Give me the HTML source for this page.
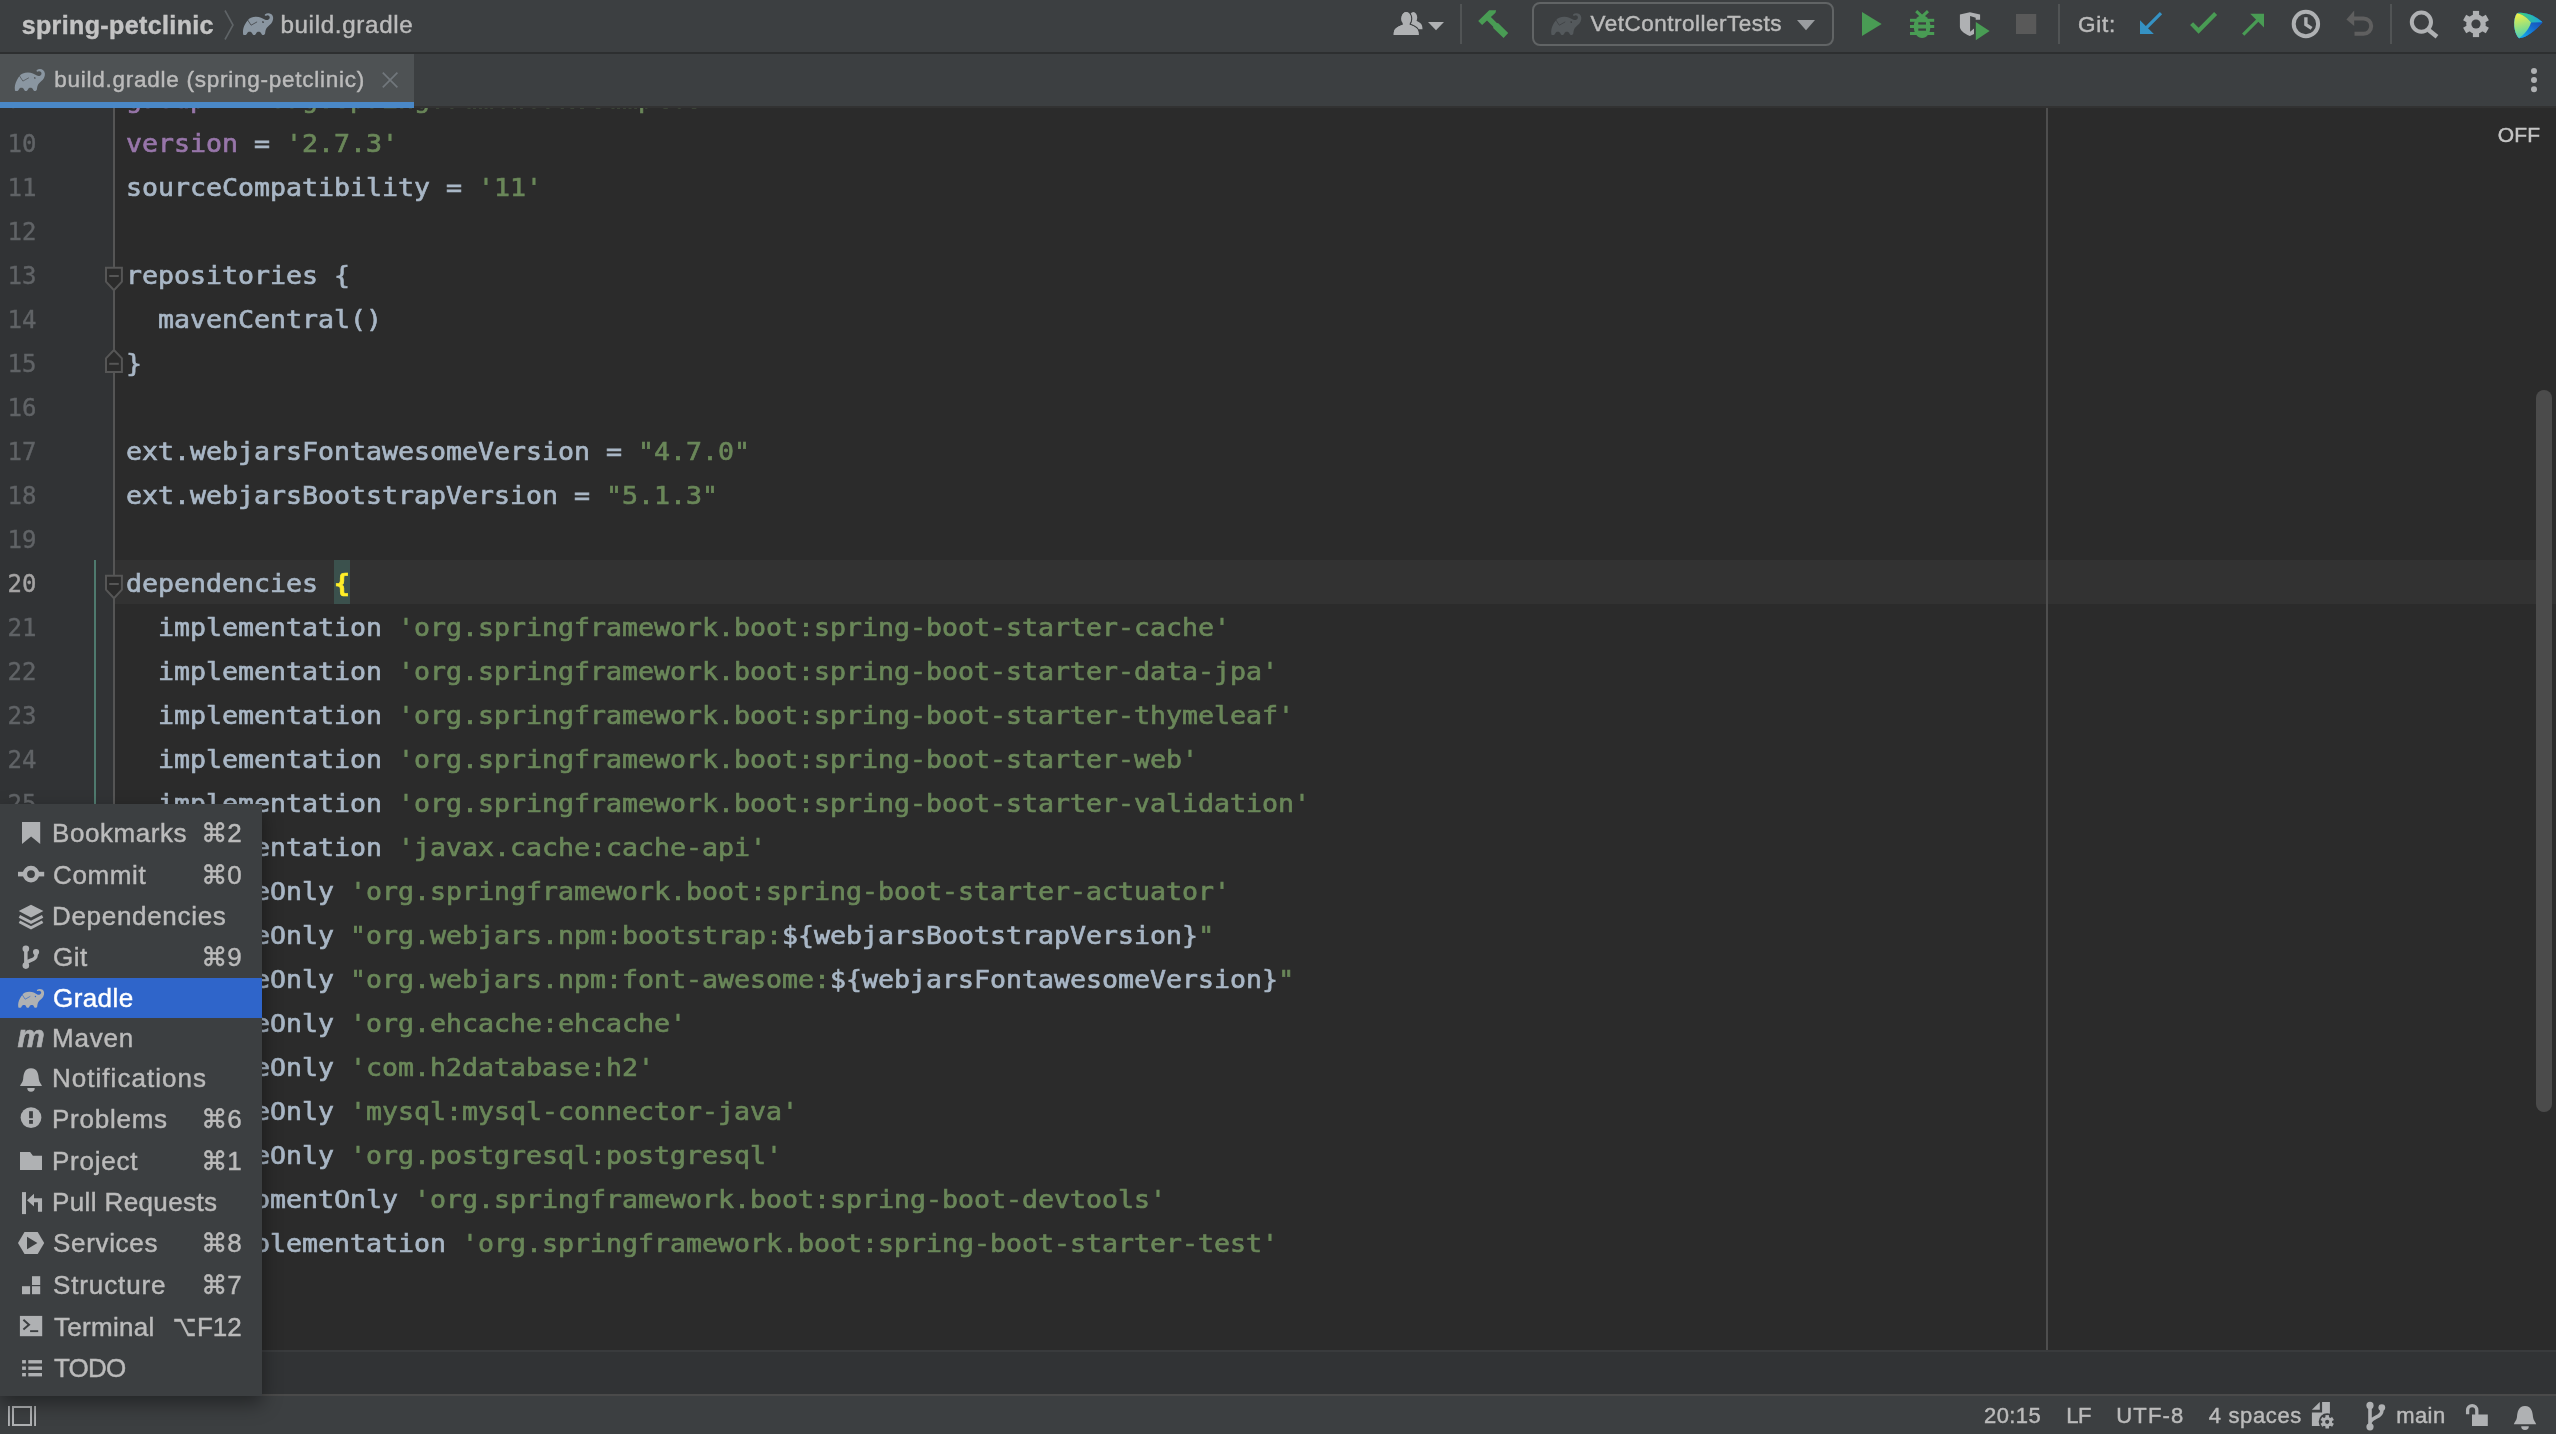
<!DOCTYPE html>
<html lang="en">
<head>
<meta charset="utf-8">
<title>spring-petclinic – build.gradle</title>
<style>
*{box-sizing:border-box;margin:0;padding:0}
html,body{width:2556px;height:1434px;overflow:hidden;background:#2b2b2b}
body{position:relative;font-family:"Liberation Sans",sans-serif;color:#bbbbbb;-webkit-font-smoothing:antialiased}
.abs{position:absolute}
svg{position:absolute;overflow:visible}
.gl{position:absolute;will-change:transform}
/* toolbar */
#toolbar{left:0;top:0;width:2556px;height:52px;background:#3c3f41}
#tbborder{left:0;top:52px;width:2556px;height:2px;background:#2d2f30}
.ui{position:absolute;white-space:nowrap;font-size:25px;line-height:30px;color:#bbbbbb}
.vsep{position:absolute;width:2px;background:#515455}
/* tabs */
#tabbar{left:0;top:54px;width:2556px;height:52px;background:#3c3f41}
#tabborder{left:0;top:106px;width:2556px;height:2px;background:#323232}
#tab{left:0;top:54px;width:414px;height:48px;background:#4e5254}
#tabline{left:0;top:102px;width:414px;height:6px;background:#4a88c7}
/* editor */
#editor{left:0;top:108px;width:2556px;height:1242px;background:#2b2b2b;overflow:hidden}
#gutter{left:0;top:0;width:113px;height:1242px;background:#313335}
#foldline{left:112.9px;top:0;width:2.2px;height:1242px;background:#555555}
#vcs{left:94px;top:452px;width:2px;height:790px;background:#4f7a6e}
#curline{left:115px;top:452px;width:2441px;height:44px;background:#323232}
#bracebg{left:334px;top:452px;width:16px;height:44px;background:#3b514d}
#margin{left:2046px;top:0;width:2px;height:1242px;background:#4e4e4e}
#scroll{left:2536px;top:282px;width:16px;height:722px;border-radius:8px;background:#4b4b4b}
.ln{position:absolute;left:7.5px;height:44px;line-height:48.4px;font-family:"DejaVu Sans Mono","Liberation Mono",monospace;font-size:24px;color:#606366;white-space:pre;letter-spacing:0}
.ln.cur{color:#a4a3a3}
.cl{position:absolute;left:126px;height:44px;line-height:46px;font-family:"DejaVu Sans Mono","Liberation Mono",monospace;font-size:26.58px;color:#a9b7c6;white-space:pre}
.cl{-webkit-text-stroke:0.7px;transform:scaleY(0.955);transform-origin:0 32.2px}
.ln{-webkit-text-stroke:0.4px}
.ui,.gl .t,.gl .k{-webkit-text-stroke:0.45px}
.s{color:#6a8759}.p{color:#9876aa}.y{color:#ffef28}
/* breadcrumb band + status */
#crumbtop{left:0;top:1350px;width:2556px;height:2px;background:#393b3d}
#crumb{left:0;top:1352px;width:2556px;height:42px;background:#313335}
#statustop{left:0;top:1394px;width:2556px;height:2px;background:#4a4a4a}
#status{left:0;top:1396px;width:2556px;height:38px;background:#3c3f41}
/* popup */
#popup{left:0;top:804px;width:262px;height:592px;background:#3c3f41;box-shadow:0 8px 18px rgba(0,0,0,.4)}
.mi{position:absolute;left:0;width:262px}
.mi.sel{background:#2f65ca}
.gl .t{position:absolute;font-size:26px;line-height:30px;color:#bbbbbb;white-space:nowrap}
.gl .t.sel{color:#ffffff}
.sym{font-family:"DejaVu Sans",sans-serif}
.sym.opt{display:inline-block;transform:scale(0.78,1.12);transform-origin:92% 80%}
.gl .k{position:absolute;right:20.3px;font-size:26px;line-height:30px;font-family:"Liberation Sans",sans-serif;color:#bbbbbb;white-space:nowrap}
</style>
</head>
<body>
<!-- ======= TOOLBAR ======= -->
<div id="toolbar" class="abs"></div>
<div id="tbborder" class="abs"></div>
<div class="vsep" style="left:1460px;top:4px;height:40px"></div>
<div class="vsep" style="left:2058px;top:4px;height:40px"></div>
<div class="vsep" style="left:2390px;top:4px;height:40px"></div>
<div class="abs" id="runbox" style="left:1532px;top:2px;width:302px;height:44px;border:2px solid #616465;border-radius:8px"></div>
<svg width="2556" height="1434" viewBox="0 0 2556 1434" style="left:0;top:0"><path d="M225,10.5L233,25L225,39.5" fill="none" stroke="#5f6467" stroke-width="1.6"/>
<g transform="translate(236.02,5.99) scale(0.02511)"><path d="M285,1135C260,1000 290,850 360,730C400,660 430,610 470,565C520,480 650,430 800,425C950,425 1060,490 1160,545C1230,580 1310,560 1340,480C1355,410 1290,365 1230,375C1200,380 1180,395 1165,390C1140,380 1135,345 1160,325C1220,280 1330,270 1410,330C1490,400 1500,520 1440,640C1390,740 1290,790 1220,880C1180,940 1165,1020 1160,1090C1150,1140 1120,1160 1080,1160C1040,1160 1015,1130 1005,1100C990,1050 950,1030 900,1030C850,1030 815,1055 800,1100C790,1135 760,1160 720,1160C680,1160 655,1135 645,1100C630,1050 590,1030 540,1030C490,1030 455,1055 440,1100C430,1135 400,1160 355,1160C320,1160 290,1150 285,1135Z" fill="#8a96a1"/><path d="M470,565L600,765L825,640" fill="none" stroke="#3c3f41" stroke-width="30" stroke-linecap="round" stroke-linejoin="round"/><ellipse cx="1075" cy="640" rx="30" ry="38" transform="rotate(-30 1075 640)" fill="#3c3f41"/></g>
<g fill="#afb1b3"><ellipse cx="1413.3" cy="17.7" rx="3.9" ry="5.7"/><path d="M1404.1,29.2C1404.1,23.5 1406.3999999999999,22.55 1410.882,20.46V17.7H1415.7179999999998V20.46C1420.2,22.55 1422.5,23.5 1422.5,29.2Z"/></g><g fill="#afb1b3" stroke="#3c3f41" stroke-width="2.4" paint-order="stroke"><ellipse cx="1406.2" cy="18.8" rx="4.9" ry="6.8"/><path d="M1393.7,35C1393.7,28.1 1396.825,26.950000000000003 1403.162,24.42V18.8H1409.238V24.42C1415.575,26.950000000000003 1418.7,28.1 1418.7,35Z"/></g><g fill="#afb1b3"><ellipse cx="1406.2" cy="18.8" rx="4.9" ry="6.8"/><path d="M1393.7,35C1393.7,28.1 1396.825,26.950000000000003 1403.162,24.42V18.8H1409.238V24.42C1415.575,26.950000000000003 1418.7,28.1 1418.7,35Z"/></g><rect x="1392" y="35" width="30" height="3" fill="#3c3f41"/><path d="M1428,22h16l-8,8.2z" fill="#afb1b3"/>
<path fill="#499c54" d="M1478.2,21.1L1489.2,10.2L1496.1,10.2L1495.5,12.7L1490.9,16.9L1496.9,22.9L1498.3,23.2L1508.2,33.1L1503.6,38L1493.4,28.2L1493,26.4L1487,20.4L1482.1,25Z"/>
<g transform="translate(1544.22,5.99) scale(0.02511)"><path d="M285,1135C260,1000 290,850 360,730C400,660 430,610 470,565C520,480 650,430 800,425C950,425 1060,490 1160,545C1230,580 1310,560 1340,480C1355,410 1290,365 1230,375C1200,380 1180,395 1165,390C1140,380 1135,345 1160,325C1220,280 1330,270 1410,330C1490,400 1500,520 1440,640C1390,740 1290,790 1220,880C1180,940 1165,1020 1160,1090C1150,1140 1120,1160 1080,1160C1040,1160 1015,1130 1005,1100C990,1050 950,1030 900,1030C850,1030 815,1055 800,1100C790,1135 760,1160 720,1160C680,1160 655,1135 645,1100C630,1050 590,1030 540,1030C490,1030 455,1055 440,1100C430,1135 400,1160 355,1160C320,1160 290,1150 285,1135Z" fill="#54595c"/><path d="M470,565L600,765L825,640" fill="none" stroke="#3c3f41" stroke-width="30" stroke-linecap="round" stroke-linejoin="round"/><ellipse cx="1075" cy="640" rx="30" ry="38" transform="rotate(-30 1075 640)" fill="#3c3f41"/></g>
<path d="M1797,20h18l-9,10.2z" fill="#9a9da0"/>
<path d="M1862,12L1881.7,24L1862,36Z" fill="#499c54"/>
<g fill="#499c54"><ellipse cx="1922.1" cy="26.8" rx="8.4" ry="11.2"/><rect x="1910" y="18.8" width="24.2" height="3"/><rect x="1910" y="25" width="24.2" height="3"/><rect x="1910" y="32" width="24.2" height="3"/><path d="M1916.2,11.2L1922.1,16.6L1928,11.2" fill="none" stroke="#499c54" stroke-width="3"/></g><g fill="#3c3f41"><rect x="1918.3" y="22.3" width="7.7" height="2.3"/><rect x="1918.3" y="28.5" width="7.7" height="2.2"/><rect x="1909" y="22" width="4.3" height="2.9"/><rect x="1930.9" y="22" width="4.3" height="2.9"/><rect x="1909" y="28.2" width="4.3" height="3.6"/><rect x="1930.9" y="28.2" width="4.3" height="3.6"/></g>
<path fill="#afb1b3" fill-rule="evenodd" d="M1959.9,14.6L1969.9,12.2L1980.1,14.5V19.8H1975.7V17.7L1970.1,16.1V31.8L1974,28.6V34L1969.9,36C1963,33 1960.3,30 1959.9,26.9Z"/><path d="M1975.8,22L1989.6,31.1L1975.8,40.3Z" fill="#499c54"/>
<rect x="2016" y="14" width="20.2" height="20" fill="#595959"/>
<path d="M2140,20.2V34H2153.8Z" fill="#3592c4"/><path d="M2161,13.2L2146,28.2" stroke="#3592c4" stroke-width="3.2" fill="none"/>
<path d="M2191.6,23.6L2198.6,30.8L2215.6,13.6" stroke="#499c54" stroke-width="4.2" fill="none"/>
<path d="M2250.2,13.8H2264V27.6Z" fill="#499c54"/><path d="M2243.2,34.6L2258,19.8" stroke="#499c54" stroke-width="3.2" fill="none"/>
<circle cx="2305.9" cy="24" r="12.2" fill="none" stroke="#afb1b3" stroke-width="4"/><path d="M2305.9,17.2V24.6L2311.6,28.4" fill="none" stroke="#afb1b3" stroke-width="3.4"/>
<path d="M2346.4,19.6L2354.2,10.6V26Z" fill="#5f5f5f"/><path d="M2353.5,18.4H2363.5A7.7,7.7 0 0 1 2363.5,33.8H2354.5" fill="none" stroke="#5f5f5f" stroke-width="4"/>
<circle cx="2421.4" cy="22.1" r="9.6" fill="none" stroke="#afb1b3" stroke-width="4"/><path d="M2428.6,30L2437,36.8" stroke="#afb1b3" stroke-width="4.4" fill="none"/>
<g fill="#afb1b3"><rect x="2472.9" y="10.9" width="6.2" height="26.2" transform="rotate(0 2476 24)"/><rect x="2472.9" y="10.9" width="6.2" height="26.2" transform="rotate(60 2476 24)"/><rect x="2472.9" y="10.9" width="6.2" height="26.2" transform="rotate(120 2476 24)"/><circle cx="2476" cy="24" r="9.8"/></g><circle cx="2476" cy="24" r="4.6" fill="#3c3f41"/>
<path d="M2517,13.2C2525,11.5 2536,16 2542.4,22.2C2536,30 2527,37.5 2519,38.2C2513.5,33 2512.5,19 2517,13.2Z" fill="#1565c8"/><path d="M2542.4,22.2L2531,22.5C2529,29 2524,35 2519,38.2C2527,37.5 2536,30 2542.4,22.2Z" fill="#1a55bb"/></svg><div class="abs" style="left:2512px;top:12px;width:32px;height:28px;background:linear-gradient(35deg,#13a6e8 22%,#1668cc 55%,#1a42aa 90%);clip-path:path('M5,1.2C13,-0.5 24,4 30.4,10.2C24,18 15,25.5 7,26.2C1.5,21 0.5,7 5,1.2Z')"></div><div class="abs" style="left:2512px;top:12px;width:32px;height:28px;background:linear-gradient(100deg,#3bd07a 25%,#1aa3e0 85%);clip-path:path('M5,1.2C13,-0.5 24,4 30.4,10.2L19,10.5C16,6 11,2.5 5,1.2Z')"></div><div class="abs" style="left:2512px;top:12px;width:32px;height:28px;background:linear-gradient(165deg,#f4f045 8%,#7fdc8c 55%,#1fb8e8 98%);clip-path:path('M5,1.2C11,2.5 16,6 19,10.5C17,17 12,23 7,26.2C1.5,21 0.5,7 5,1.2Z')"></div>

<!-- ======= TABS ======= -->
<div id="tabbar" class="abs"></div>
<div id="tabborder" class="abs"></div>
<div id="tab" class="abs"></div>
<div id="tabline" class="abs"></div>
<div class="gl" style="left:0;top:0;width:2556px;height:108px"><div class="ui" id="tx_proj" style="left:21.7px;top:10.3px;font-size:25px;letter-spacing:0.38px;color:#c3c3c3;font-weight:bold">spring-petclinic</div><div class="ui" id="tx_file" style="left:280.4px;top:10.3px;font-size:24.2px;letter-spacing:0.664px;color:#bbbbbb">build.gradle</div><div class="ui" id="tx_run" style="left:1590.6px;top:9.4px;font-size:22.5px;letter-spacing:0.494px;color:#bbbbbb">VetControllerTests</div><div class="ui" id="tx_git" style="left:2077.9px;top:9.5px;font-size:22.5px;letter-spacing:0.767px;color:#bbbbbb">Git:</div><div class="ui" id="tx_tab" style="left:54.3px;top:64.9px;font-size:22.5px;letter-spacing:0.74px;color:#bbbbbb">build.gradle (spring-petclinic)</div></div>
<svg width="2556" height="1434" viewBox="0 0 2556 1434" style="left:0;top:0"><g transform="translate(7.82,61.89) scale(0.02511)"><path d="M285,1135C260,1000 290,850 360,730C400,660 430,610 470,565C520,480 650,430 800,425C950,425 1060,490 1160,545C1230,580 1310,560 1340,480C1355,410 1290,365 1230,375C1200,380 1180,395 1165,390C1140,380 1135,345 1160,325C1220,280 1330,270 1410,330C1490,400 1500,520 1440,640C1390,740 1290,790 1220,880C1180,940 1165,1020 1160,1090C1150,1140 1120,1160 1080,1160C1040,1160 1015,1130 1005,1100C990,1050 950,1030 900,1030C850,1030 815,1055 800,1100C790,1135 760,1160 720,1160C680,1160 655,1135 645,1100C630,1050 590,1030 540,1030C490,1030 455,1055 440,1100C430,1135 400,1160 355,1160C320,1160 290,1150 285,1135Z" fill="#8a96a1"/><path d="M470,565L600,765L825,640" fill="none" stroke="#4e5254" stroke-width="30" stroke-linecap="round" stroke-linejoin="round"/><ellipse cx="1075" cy="640" rx="30" ry="38" transform="rotate(-30 1075 640)" fill="#4e5254"/></g>
<path d="M382.8,72.6L397.4,87.4M397.4,72.6L382.8,87.4" stroke="#71777c" stroke-width="1.7" fill="none"/>
<circle cx="2534" cy="70.9" r="3" fill="#afb1b3"/>
<circle cx="2534" cy="80" r="3" fill="#afb1b3"/>
<circle cx="2534" cy="89.2" r="3" fill="#afb1b3"/></svg>

<!-- ======= EDITOR ======= -->
<div id="editor" class="abs">
<div id="gutter" class="abs"></div>
<div id="curline" class="abs"></div>
<div id="bracebg" class="abs"></div>
<div id="vcs" class="abs"></div>
<div id="foldline" class="abs"></div>
<div id="margin" class="abs"></div>
<div id="scroll" class="abs"></div>
<div class="gl" style="left:0;top:0;width:2556px;height:1242px"><div class="ui" id="tx_off" style="left:2497.7px;top:11.7px;font-size:21px;letter-spacing:0.15px;color:#c4c4c4">OFF</div>
<div class="ln" style="top:-32px">9</div>
<div class="cl" style="top:-32px"><span class="p">group</span> = <span class="s">'org.springframework.samples'</span></div>
<div class="ln" style="top:12px">10</div>
<div class="cl" style="top:12px"><span class="p">version</span> = <span class="s">'2.7.3'</span></div>
<div class="ln" style="top:56px">11</div>
<div class="cl" style="top:56px">sourceCompatibility = <span class="s">'11'</span></div>
<div class="ln" style="top:100px">12</div>
<div class="ln" style="top:144px">13</div>
<div class="cl" style="top:144px">repositories {</div>
<div class="ln" style="top:188px">14</div>
<div class="cl" style="top:188px">  mavenCentral()</div>
<div class="ln" style="top:232px">15</div>
<div class="cl" style="top:232px">}</div>
<div class="ln" style="top:276px">16</div>
<div class="ln" style="top:320px">17</div>
<div class="cl" style="top:320px">ext.webjarsFontawesomeVersion = <span class="s">"4.7.0"</span></div>
<div class="ln" style="top:364px">18</div>
<div class="cl" style="top:364px">ext.webjarsBootstrapVersion = <span class="s">"5.1.3"</span></div>
<div class="ln" style="top:408px">19</div>
<div class="ln cur" style="top:452px">20</div>
<div class="cl" style="top:452px">dependencies <span class="y" style="font-weight:bold">{</span></div>
<div class="ln" style="top:496px">21</div>
<div class="cl" style="top:496px">  implementation <span class="s">'org.springframework.boot:spring-boot-starter-cache'</span></div>
<div class="ln" style="top:540px">22</div>
<div class="cl" style="top:540px">  implementation <span class="s">'org.springframework.boot:spring-boot-starter-data-jpa'</span></div>
<div class="ln" style="top:584px">23</div>
<div class="cl" style="top:584px">  implementation <span class="s">'org.springframework.boot:spring-boot-starter-thymeleaf'</span></div>
<div class="ln" style="top:628px">24</div>
<div class="cl" style="top:628px">  implementation <span class="s">'org.springframework.boot:spring-boot-starter-web'</span></div>
<div class="ln" style="top:672px">25</div>
<div class="cl" style="top:672px">  implementation <span class="s">'org.springframework.boot:spring-boot-starter-validation'</span></div>
<div class="ln" style="top:716px">26</div>
<div class="cl" style="top:716px">  implementation <span class="s">'javax.cache:cache-api'</span></div>
<div class="ln" style="top:760px">27</div>
<div class="cl" style="top:760px">  runtimeOnly <span class="s">'org.springframework.boot:spring-boot-starter-actuator'</span></div>
<div class="ln" style="top:804px">28</div>
<div class="cl" style="top:804px">  runtimeOnly <span class="s">"org.webjars.npm:bootstrap:</span>${webjarsBootstrapVersion}<span class="s">"</span></div>
<div class="ln" style="top:848px">29</div>
<div class="cl" style="top:848px">  runtimeOnly <span class="s">"org.webjars.npm:font-awesome:</span>${webjarsFontawesomeVersion}<span class="s">"</span></div>
<div class="ln" style="top:892px">30</div>
<div class="cl" style="top:892px">  runtimeOnly <span class="s">'org.ehcache:ehcache'</span></div>
<div class="ln" style="top:936px">31</div>
<div class="cl" style="top:936px">  runtimeOnly <span class="s">'com.h2database:h2'</span></div>
<div class="ln" style="top:980px">32</div>
<div class="cl" style="top:980px">  runtimeOnly <span class="s">'mysql:mysql-connector-java'</span></div>
<div class="ln" style="top:1024px">33</div>
<div class="cl" style="top:1024px">  runtimeOnly <span class="s">'org.postgresql:postgresql'</span></div>
<div class="ln" style="top:1068px">34</div>
<div class="cl" style="top:1068px">  developmentOnly <span class="s">'org.springframework.boot:spring-boot-devtools'</span></div>
<div class="ln" style="top:1112px">35</div>
<div class="cl" style="top:1112px">  testImplementation <span class="s">'org.springframework.boot:spring-boot-starter-test'</span></div>
<div class="ln" style="top:1156px">36</div>
<div class="cl" style="top:1156px"><span class="y" style="font-weight:bold">}</span></div>
</div>
<svg width="2556" height="1242" style="left:0;top:0"><path d="M106,159.8H121.9V173.6L113.95,182.2L106,173.6Z" fill="#2b2b2b" stroke="#565656" stroke-width="2"/><path d="M109.2,168H118.8" stroke="#565656" stroke-width="2"/>
<path d="M106,263.9H121.9V250.3L113.95,242L106,250.3Z" fill="#2b2b2b" stroke="#565656" stroke-width="2"/><path d="M109.2,255.8H118.8" stroke="#565656" stroke-width="2"/>
<path d="M106,467.8H121.9V481.6L113.95,490.2L106,481.6Z" fill="#2b2b2b" stroke="#565656" stroke-width="2"/><path d="M109.2,476H118.8" stroke="#565656" stroke-width="2"/>
<path d="M106,1187.9H121.9V1174.3L113.95,1166L106,1174.3Z" fill="#2b2b2b" stroke="#565656" stroke-width="2"/><path d="M109.2,1179.8H118.8" stroke="#565656" stroke-width="2"/></svg>
</div>

<!-- ======= BREADCRUMB BAND / STATUS ======= -->
<div id="crumbtop" class="abs"></div>
<div id="crumb" class="abs"></div>
<div id="statustop" class="abs"></div>
<div id="status" class="abs"></div>
<div class="gl" style="left:0;top:1396px;width:2556px;height:38px"><div class="ui" id="tx_s_pos" style="left:1984.0px;top:5.4px;font-size:22px;letter-spacing:0.425px;color:#bbbbbb">20:15</div><div class="ui" id="tx_s_lf" style="left:2066.2px;top:5.4px;font-size:22px;letter-spacing:-0.3px;color:#bbbbbb">LF</div><div class="ui" id="tx_s_enc" style="left:2116.3px;top:5.4px;font-size:22px;letter-spacing:1.175px;color:#bbbbbb">UTF-8</div><div class="ui" id="tx_s_ind" style="left:2208.8px;top:5.4px;font-size:22px;letter-spacing:0.643px;color:#bbbbbb">4 spaces</div><div class="ui" id="tx_s_br" style="left:2396.2px;top:5.2px;font-size:22px;letter-spacing:0.433px;color:#bbbbbb">main</div></div>
<svg width="2556" height="1434" viewBox="0 0 2556 1434" style="left:0;top:0"><rect x="8" y="1406" width="1.9" height="20" fill="#afb1b3"/><rect x="34.1" y="1406" width="1.9" height="20" fill="#afb1b3"/><rect x="13" y="1407" width="18" height="18" fill="none" stroke="#afb1b3" stroke-width="2"/>
<path d="M2322.1,1402H2329.9V1425.9H2311.9V1412.4H2322.1Z" fill="#afb1b3"/><path d="M2311.9,1409.8L2319.8,1402V1409.8Z" fill="#afb1b3"/>
<circle cx="2327.2" cy="1421.8" r="8.5" fill="#3c3f41"/><g fill="#afb1b3"><rect x="2325.45" y="1415.1" width="3.5" height="13.4" transform="rotate(0 2327.2 1421.8)"/><rect x="2325.45" y="1415.1" width="3.5" height="13.4" transform="rotate(60 2327.2 1421.8)"/><rect x="2325.45" y="1415.1" width="3.5" height="13.4" transform="rotate(120 2327.2 1421.8)"/><circle cx="2327.2" cy="1421.8" r="4.9"/></g><circle cx="2327.2" cy="1421.8" r="2.1" fill="#3c3f41"/>
<g fill="#afb1b3"><circle cx="2370" cy="1405.4" r="3.6"/><circle cx="2381.8" cy="1407.6" r="3.4"/><circle cx="2370" cy="1426.8" r="3.6"/></g><path d="M2370,1405.4V1426.8M2381.8,1407.6V1411C2381.8,1417.6 2372.4,1416.4 2370,1422.4" fill="none" stroke="#afb1b3" stroke-width="3.6"/>
<rect x="2472" y="1414.5" width="15.8" height="11.5" fill="#afb1b3"/><path d="M2467.6,1414.2V1410.2A4.6,4.6 0 0 1 2476.8,1410.2V1415" fill="none" stroke="#afb1b3" stroke-width="3.3"/>
<path fill="#afb1b3" d="M2525,1406.1C2531.6,1406.1 2532.6,1412.1 2533.0,1417.1C2533.3,1420.6 2535.6,1422.1 2536.2,1424.3H2513.8C2514.4,1422.1 2516.7,1420.6 2517.0,1417.1C2517.4,1412.1 2518.4,1406.1 2525,1406.1Z"/><path fill="#afb1b3" d="M2521.2,1426.3H2528.8A3.8,3.8 0 0 1 2521.2,1426.3Z"/></svg>

<!-- ======= POPUP ======= -->
<div id="popup" class="abs">
<div class="mi sel" style="top:174px;height:40px"></div>
<svg width="262" height="592" viewBox="0 804 262 592" style="left:0;top:0"><path fill="#afb1b3" d="M22,822H40.2V844L31.1,836.4L22,844Z"/>
<rect x="18" y="871.8" width="26.2" height="4.6" fill="#afb1b3"/><circle cx="31" cy="874.1" r="6.1" fill="#3c3f41" stroke="#afb1b3" stroke-width="4.4"/>
<path fill="#afb1b3" d="M31,904.8L43.4,911.1L31,917.4L18.7,911.1Z"/><path d="M19.4,916.4L31,922.4L42.6,916.4M19.4,921.8L31,927.8L42.6,921.8" fill="none" stroke="#afb1b3" stroke-width="2.9"/>
<g fill="#afb1b3"><circle cx="25.85" cy="948.8" r="3.3"/><circle cx="36.05" cy="952.1" r="3.1"/><circle cx="25.85" cy="965.6" r="3.3"/></g><path d="M25.85,948.8V965.6M36.05,952.1V955.4C36.05,960.6 27.6,959.6 25.9,963.6" fill="none" stroke="#afb1b3" stroke-width="3.5"/>
<g transform="translate(12.16,982.65) scale(0.02164)"><path d="M285,1135C260,1000 290,850 360,730C400,660 430,610 470,565C520,480 650,430 800,425C950,425 1060,490 1160,545C1230,580 1310,560 1340,480C1355,410 1290,365 1230,375C1200,380 1180,395 1165,390C1140,380 1135,345 1160,325C1220,280 1330,270 1410,330C1490,400 1500,520 1440,640C1390,740 1290,790 1220,880C1180,940 1165,1020 1160,1090C1150,1140 1120,1160 1080,1160C1040,1160 1015,1130 1005,1100C990,1050 950,1030 900,1030C850,1030 815,1055 800,1100C790,1135 760,1160 720,1160C680,1160 655,1135 645,1100C630,1050 590,1030 540,1030C490,1030 455,1055 440,1100C430,1135 400,1160 355,1160C320,1160 290,1150 285,1135Z" fill="#afb1b3"/><path d="M470,565L600,765L825,640" fill="none" stroke="#2f65ca" stroke-width="30" stroke-linecap="round" stroke-linejoin="round"/><ellipse cx="1075" cy="640" rx="30" ry="38" transform="rotate(-30 1075 640)" fill="#2f65ca"/></g>
<text x="17.6" y="1047.3" font-family="Liberation Sans, sans-serif" font-weight="bold" font-style="italic" font-size="30.5" fill="#afb1b3" stroke="#afb1b3" stroke-width="0.6">m</text>
<path fill="#afb1b3" d="M31,1068.2C37.468,1068.2 38.448,1074.0800000000002 38.84,1078.98C39.134,1082.41 41.388,1083.88 41.976,1086.036H20.024C20.612000000000002,1083.88 22.866,1082.41 23.16,1078.98C23.552,1074.0800000000002 24.532,1068.2 31,1068.2Z"/><path fill="#afb1b3" d="M27.276,1087.996H34.724A3.7239999999999998,3.7239999999999998 0 0 1 27.276,1087.996Z"/>
<circle cx="31" cy="1117.6" r="10.4" fill="#afb1b3"/><rect x="29.1" y="1111.2" width="3.8" height="7" fill="#3c3f41"/><rect x="29.1" y="1120" width="3.8" height="3.8" fill="#3c3f41"/>
<path fill="#afb1b3" d="M20,1152H30.1L32.9,1155.7H42V1170H20Z"/>
<rect x="22" y="1192.1" width="4" height="22" fill="#afb1b3"/><path d="M27,1200.2L34,1193.8V1206.6Z" fill="#afb1b3"/><path d="M33.5,1200.2H40V1211.8" fill="none" stroke="#afb1b3" stroke-width="4.1"/>
<path fill="#afb1b3" d="M18,1243L24.5,1231.9H37.7L44.2,1243L37.7,1254.1H24.5Z"/><path fill="#3c3f41" d="M27,1236.7V1249.3L37.4,1243Z"/>
<g fill="#afb1b3"><rect x="32" y="1276.2" width="8.2" height="8.8"/><rect x="22" y="1286.2" width="8.1" height="8"/><rect x="32" y="1286.2" width="8.2" height="8"/></g>
<rect x="19.9" y="1315.9" width="22.3" height="20.3" fill="#afb1b3"/><path d="M23.4,1319.8L29,1324.7L23.4,1329.6" fill="none" stroke="#3c3f41" stroke-width="2"/><rect x="30.1" y="1330.2" width="8.1" height="1.9" fill="#3c3f41"/>
<rect x="22.1" y="1360.1" width="3.8" height="3.4" fill="#afb1b3"/><rect x="28.3" y="1360.1" width="13.7" height="3.4" fill="#afb1b3"/>
<rect x="22.1" y="1366.5" width="3.8" height="3.4" fill="#afb1b3"/><rect x="28.3" y="1366.5" width="13.7" height="3.4" fill="#afb1b3"/>
<rect x="22.1" y="1373.0" width="3.8" height="3.4" fill="#afb1b3"/><rect x="28.3" y="1373.0" width="13.7" height="3.4" fill="#afb1b3"/></svg>
<div class="gl" style="left:0;top:0;width:262px;height:592px"><span class="t" id="m0" style="left:52.0px;top:14.0px;letter-spacing:0.562px">Bookmarks</span>
<span class="k" style="top:14.0px"><span class="sym">⌘</span>2</span>
<span class="t" id="m1" style="left:53.0px;top:56.0px;letter-spacing:0.62px">Commit</span>
<span class="k" style="top:56.0px"><span class="sym">⌘</span>0</span>
<span class="t" id="m2" style="left:52.0px;top:97.0px;letter-spacing:0.691px">Dependencies</span>
<span class="t" id="m3" style="left:53.0px;top:138.0px;letter-spacing:0.45px">Git</span>
<span class="k" style="top:138.0px"><span class="sym">⌘</span>9</span>
<span class="t sel" id="m4" style="left:53.0px;top:179.0px;letter-spacing:0.42px">Gradle</span>
<span class="t" id="m5" style="left:52.0px;top:219.0px;letter-spacing:0.775px">Maven</span>
<span class="t" id="m6" style="left:52.0px;top:259.0px;letter-spacing:1.025px">Notifications</span>
<span class="t" id="m7" style="left:52.0px;top:300.0px;letter-spacing:0.757px">Problems</span>
<span class="k" style="top:300.0px"><span class="sym">⌘</span>6</span>
<span class="t" id="m8" style="left:52.0px;top:342.0px;letter-spacing:0.75px">Project</span>
<span class="k" style="top:342.0px"><span class="sym">⌘</span>1</span>
<span class="t" id="m9" style="left:52.0px;top:383.0px;letter-spacing:0.383px">Pull Requests</span>
<span class="t" id="m10" style="left:53.0px;top:424.0px;letter-spacing:0.671px">Services</span>
<span class="k" style="top:424.0px"><span class="sym">⌘</span>8</span>
<span class="t" id="m11" style="left:53.0px;top:466.0px;letter-spacing:0.875px">Structure</span>
<span class="k" style="top:466.0px"><span class="sym">⌘</span>7</span>
<span class="t" id="m12" style="left:54.0px;top:508.0px;letter-spacing:0.3px">Terminal</span>
<span class="k" style="top:508.0px"><span class="sym opt">⌥</span>F12</span>
<span class="t" id="m13" style="left:54.0px;top:549.0px;letter-spacing:-0.833px">TODO</span></div>
</div>
</body>
</html>
